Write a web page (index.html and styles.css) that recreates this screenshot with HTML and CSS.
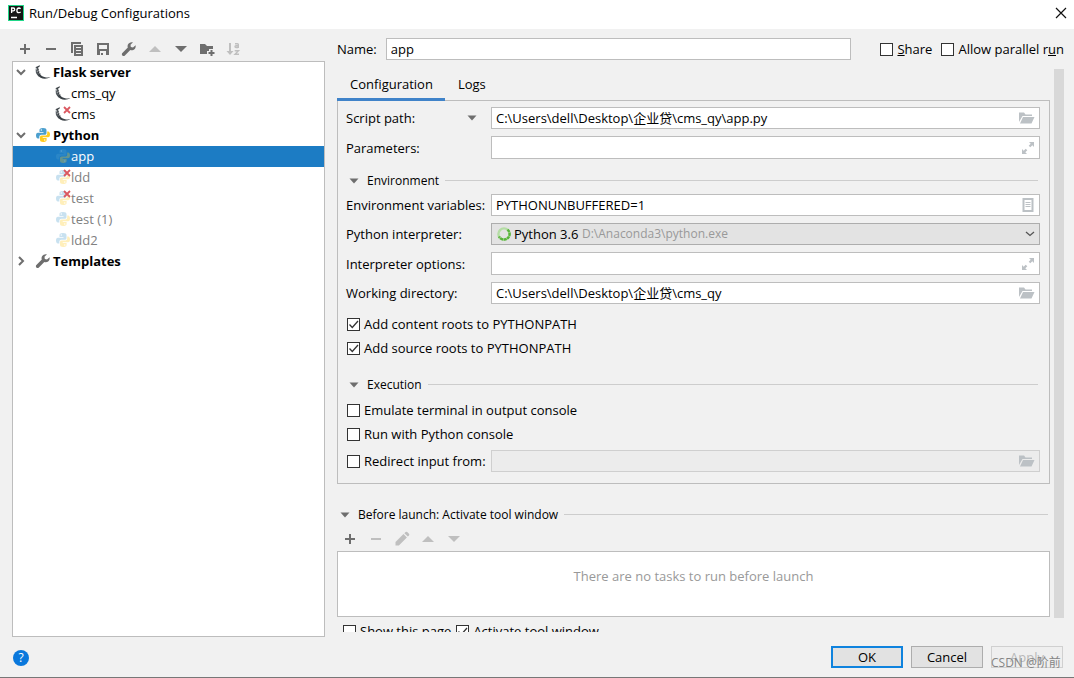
FILE: index.html
```html
<!DOCTYPE html>
<html lang="en">
<head>
<meta charset="utf-8">
<title>Run/Debug Configurations</title>
<link rel="stylesheet" href="styles.css">
</head>
<body>
<svg class="defs" aria-hidden="true">
  <symbol id="plus" viewBox="0 0 16 16"><path fill="currentColor" d="M7 3h2v4h4v2H9v4H7V9H3V7h4z"/></symbol>
  <symbol id="minus" viewBox="0 0 16 16"><path fill="currentColor" d="M3 7h10v2H3z"/></symbol>
  <symbol id="copy" viewBox="0 0 16 16"><path fill="currentColor" fill-rule="evenodd" d="M2 1h10v2H4v9H2zM5 4h9v11H5zM7 6v1h5V6zm0 3v1h5V9zm0 3v1h5v-1z"/></symbol>
  <symbol id="save" viewBox="0 0 16 16"><path fill="currentColor" fill-rule="evenodd" d="M2 2h12v12H2zM4 4v4h8V4zM5 10v4h1v-2h2v2h3v-4z"/></symbol>
  <symbol id="wrench" viewBox="0 0 16 16"><path fill="currentColor" d="M14.600 4.200 12 6.400 9.800 5.900 9.500 3.700 12 1.300C9.800.7 7.600 1.800 6.800 3.800c-.4 1-.3 1.900 0 2.800L1.400 12c-.7.7-.7 1.800 0 2.500s1.800.7 2.500 0l5.400-5.400c2.900 1 6-1.400 5.300-4.900z"/></symbol>
  <symbol id="up" viewBox="0 0 16 16"><path fill="currentColor" d="M8 5l6 6H2z"/></symbol>
  <symbol id="down" viewBox="0 0 16 16"><path fill="currentColor" d="M2 5h12l-6 6z"/></symbol>
  <symbol id="newfolder" viewBox="0 0 16 16"><path fill="currentColor" d="M1 3h5l2 2h6v3h-4v2H8v3H1z"/><path fill="currentColor" d="M11.500 9h2v2h2v2h-2v2h-2v-2h-2v-2h2z"/></symbol>
  <symbol id="sort" viewBox="0 0 16 16"><path fill="currentColor" d="M4 2h2v8h2.500L5 14 1.500 10H4z"/><path fill="none" stroke="currentColor" stroke-width="1.400" d="M10 2.700h2.500q.8 0 .8.800V7M13 4.700h-2q-1 0-1 .9t1 .9h2M9.700 9.700h3.800L10 13.300h4"/></symbol>
  <symbol id="pencil" viewBox="0 0 16 16"><path fill="currentColor" d="M1.500 14.500v-3.400l8-8 3.400 3.400-8 8zM10.400 2.200l1.200-1.200q.8-.7 1.600 0L15 2.800q.7.8 0 1.600l-1.200 1.200z"/></symbol>
  <symbol id="caret" viewBox="0 0 10 6"><path fill="currentColor" d="M.5.500h9L5 5.500z"/></symbol>
  <symbol id="chevron" viewBox="0 0 10 10"><path fill="none" stroke="currentColor" stroke-width="2" d="M1 3l4 4 4-4"/></symbol>
  <symbol id="folder" viewBox="0 0 16 12"><path fill="currentColor" d="M0 .5h5l1.500 2H13V4H3.500L0 10zM4 5h11.500L12.500 11.500H1z"/></symbol>
  <symbol id="expand" viewBox="0 0 14 14"><path fill="currentColor" d="M8 1h5v5l-1.700-1.700-2 2-1.600-1.600 2-2zM1 8l1.700 1.700 2-2 1.600 1.600-2 2L6 13H1z"/></symbol>
  <symbol id="doc" viewBox="0 0 12 14"><path fill="none" stroke="currentColor" stroke-width="2" d="M1.500 1h9v12h-9z"/><path stroke="currentColor" d="M3.500 4.500h5M3.500 6.500h5M3.500 8.500h5"/></symbol>
  <symbol id="flask" viewBox="0 0 16 16"><path fill="none" stroke="#9da2a6" stroke-width="1.600" d="M2.200 2.800C.8 6 1.400 9.800 4.300 12"/><path fill="#3a4045" d="M.3 4 1.200 3 4.600 1.200 5 2.200 3.300 3.300C3 6.500 4 9.600 6.500 11.700c2.200 1.700 5.400 2 9 1.600-3.200 1.600-6.900 1.900-9.900.4C2.500 12.200.8 9 .9 5.600c1 2.800 2 4.600 3.400 6-1.300-2-2.200-4.700-2.200-7.800z"/><path stroke="#3a4045" stroke-width=".7" d="M1.200 6.500 4 5.400M1.600 9l2.900-1.300M3.200 11.200l2.500-1.400"/></symbol>
  <symbol id="python" viewBox="0 0 16 16"><path fill="#4b9fce" d="M8 1c-3 0-3.500 1-3.500 2.200V5H8.500v.7H3C1.500 5.700 1 7 1 8.500s.6 3 2 3h1.300V9.700c0-1.200 1-2 2-2h3.500c1 0 1.700-.8 1.700-1.800V3.200C11.500 1.700 10.500 1 8 1z"/><path fill="#ffcb1f" d="M8.200 15c3 0 3.400-1 3.400-2.200V11H7.700v-.7H13c1.500 0 2-1.300 2-2.800s-.6-2.900-2-2.900h-.8v1.800c0 1.300-.9 2.200-2 2.200H6.700C5.600 8.600 5 9.400 5 10.300v2.500C5 14.300 6 15 8.200 15z"/><circle cx="6.300" cy="3" r=".7" fill="#fff"/><circle cx="9.800" cy="13" r=".7" fill="#fff"/></symbol>
  <symbol id="cross" viewBox="0 0 8 8"><path fill="none" stroke="#db5860" stroke-width="1.800" d="M1 1l6 6M7 1L1 7"/></symbol>
</svg>

<div class="dialog">
  <header class="titlebar">
    <svg class="app-icon" viewBox="0 0 16 16" aria-hidden="true"><rect width="16" height="16" fill="#21d789"/><rect x="1" y="1" width="14" height="14" fill="#161616"/><path fill="none" stroke="#fff" stroke-width="1.300" d="M3.600 8V3h1.700q1.400 0 1.400 1.400t-1.400 1.400H3.600M12.600 3.700Q11.900 3 10.900 3 8.900 3.200 8.900 5.400t2 2.200q1 0 1.700-.7M3 12.500h6"/></svg>
    <h1>Run/Debug Configurations</h1>
    <button class="close" aria-label="Close"><svg viewBox="0 0 12 12"><path stroke="#111" stroke-width="1.200" d="M1 1l10 10M11 1L1 11"/></svg></button>
  </header>

  <main class="content">
    <aside class="sidebar">
      <div class="toolbar">
        <button aria-label="Add"><svg><use href="#plus"/></svg></button>
        <button aria-label="Remove"><svg><use href="#minus"/></svg></button>
        <button aria-label="Copy"><svg><use href="#copy"/></svg></button>
        <button aria-label="Save"><svg><use href="#save"/></svg></button>
        <button aria-label="Edit templates"><svg><use href="#wrench"/></svg></button>
        <button aria-label="Move up" disabled><svg><use href="#up"/></svg></button>
        <button aria-label="Move down"><svg><use href="#down"/></svg></button>
        <button aria-label="New folder"><svg><use href="#newfolder"/></svg></button>
        <button aria-label="Sort" disabled><svg><use href="#sort"/></svg></button>
      </div>
      <ul class="tree">
        <li class="group"><svg class="arrow"><use href="#chevron"/></svg><svg class="icon"><use href="#flask"/></svg>Flask server</li>
        <li class="leaf"><svg class="icon"><use href="#flask"/></svg>cms_qy</li>
        <li class="leaf broken"><svg class="icon"><use href="#flask"/></svg><svg class="badge"><use href="#cross"/></svg>cms</li>
        <li class="group"><svg class="arrow"><use href="#chevron"/></svg><svg class="icon"><use href="#python"/></svg>Python</li>
        <li class="leaf faded selected"><svg class="icon"><use href="#python"/></svg>app</li>
        <li class="leaf faded broken"><svg class="icon"><use href="#python"/></svg><svg class="badge"><use href="#cross"/></svg>ldd</li>
        <li class="leaf faded broken"><svg class="icon"><use href="#python"/></svg><svg class="badge"><use href="#cross"/></svg>test</li>
        <li class="leaf faded"><svg class="icon"><use href="#python"/></svg>test (1)</li>
        <li class="leaf faded"><svg class="icon"><use href="#python"/></svg>ldd2</li>
        <li class="group"><svg class="arrow closed"><use href="#chevron"/></svg><svg class="icon tool"><use href="#wrench"/></svg>Templates</li>
      </ul>
    </aside>

    <section class="editor">
      <div class="name-row">
        <label for="name">Name:</label>
        <div class="field"><input id="name" type="text" value="app"></div>
        <label class="check"><input type="checkbox"><span><u>S</u>hare</span></label>
        <label class="check"><input type="checkbox"><span>Allow parallel r<u>u</u>n</span></label>
      </div>

      <div class="scroll">
        <div class="page">
          <nav class="tabs">
            <button class="tab active">Configuration</button>
            <button class="tab">Logs</button>
          </nav>
          <div class="panel">
            <div class="fields">
              <div class="row"><label for="script">Script path:</label><svg class="caret"><use href="#caret"/></svg>
                <div class="field"><input id="script" type="text" value="C:\Users\dell\Desktop\企业贷\cms_qy\app.py"><button aria-label="Browse"><svg class="i-folder"><use href="#folder"/></svg></button></div></div>
              <div class="row"><label for="params">Parameters:</label>
                <div class="field tall"><input id="params" type="text"><button aria-label="Expand"><svg class="i-expand"><use href="#expand"/></svg></button></div></div>
            </div>
            <h2 class="section"><svg class="caret"><use href="#caret"/></svg>Environment</h2>
            <div class="fields">
              <div class="row"><label for="env">Environment variables:</label>
                <div class="field"><input id="env" type="text" value="PYTHONUNBUFFERED=1"><button aria-label="Edit variables"><svg class="i-doc"><use href="#doc"/></svg></button></div></div>
              <div class="row"><label for="interp">Python interpreter:</label>
                <div class="field combo">
                  <svg class="ring" viewBox="0 0 14 14" aria-hidden="true"><circle cx="7" cy="7" r="5.600" fill="none" stroke="#b5dda5" stroke-width="2.400"/><path fill="none" stroke="#58b33c" stroke-width="2.400" stroke-dasharray="3 .6" d="M10.500 2.600A5.600 5.600 0 1 1 2 9.500"/></svg>
                  <select id="interp"><option>Python 3.6</option></select>
                  <span class="path">D:\Anaconda3\python.exe</span>
                  <svg class="drop" viewBox="0 0 10 6"><path fill="none" stroke="#555" stroke-width="1.300" d="M1 1l4 3.500L9 1"/></svg>
                </div></div>
              <div class="row"><label for="opts">Interpreter options:</label>
                <div class="field tall"><input id="opts" type="text"><button aria-label="Expand"><svg class="i-expand"><use href="#expand"/></svg></button></div></div>
              <div class="row"><label for="wd">Working directory:</label>
                <div class="field"><input id="wd" type="text" value="C:\Users\dell\Desktop\企业贷\cms_qy"><button aria-label="Browse"><svg class="i-folder"><use href="#folder"/></svg></button></div></div>
            </div>
            <div class="checks first">
              <label class="check"><input type="checkbox" checked><span>Add content roots to PYTHONPATH</span></label>
              <label class="check"><input type="checkbox" checked><span>Add source roots to PYTHONPATH</span></label>
            </div>
            <h2 class="section lower"><svg class="caret"><use href="#caret"/></svg>Execution</h2>
            <div class="checks">
              <label class="check"><input type="checkbox"><span>Emulate terminal in output console</span></label>
              <label class="check"><input type="checkbox"><span>Run with Python console</span></label>
            </div>
            <div class="row redirect">
              <label class="check"><input type="checkbox"><span>Redirect input from:</span></label>
              <div class="field disabled"><input type="text" aria-label="Input file" disabled><button aria-label="Browse" disabled><svg class="i-folder"><use href="#folder"/></svg></button></div>
            </div>
          </div>

          <h2 class="section before"><svg class="caret"><use href="#caret"/></svg>Before launch: Activate tool window</h2>
          <div class="toolbar tasks-bar">
            <button aria-label="Add task"><svg><use href="#plus"/></svg></button>
            <button aria-label="Remove task" disabled><svg><use href="#minus"/></svg></button>
            <button aria-label="Edit task" disabled><svg><use href="#pencil"/></svg></button>
            <button aria-label="Move task up" disabled><svg><use href="#up"/></svg></button>
            <button aria-label="Move task down" disabled><svg><use href="#down"/></svg></button>
          </div>
          <div class="tasks">There are no tasks to run before launch</div>
          <div class="options">
            <label class="check"><input type="checkbox"><span>Show this page</span></label>
            <label class="check"><input type="checkbox" checked><span>Activate tool window</span></label>
          </div>
        </div>
        <div class="scrollbar"></div>
      </div>
    </section>
  </main>

  <footer class="footer">
    <button class="help" aria-label="Help">?</button>
    <button class="btn primary">OK</button>
    <button class="btn">Cancel</button>
    <div class="apply"><button class="btn" disabled>Apply</button><span class="watermark">CSDN @阶前</span></div>
  </footer>
</div>
</body>
</html>
```
FILE: styles.css
```css
* { box-sizing: border-box; }
body {
  margin: 0;
  font: 13px/20px "Open Sans", "Noto Sans CJK SC", sans-serif;
  color: #000;
  background: #f1f1f1;
}
button, input, select { font: inherit; color: inherit; margin: 0; padding: 0; border: 0; background: none; }
svg { display: block; flex: none; }
.defs { display: none; }

.dialog { display: flex; flex-direction: column; height: 100vh; border-bottom: 1px solid #777; }

.titlebar { display: flex; align-items: center; gap: 5px; height: 29px; padding: 0 7px 3px 8px; background: #fff; }
.titlebar h1 { flex: 1; margin: 0; font-size: 13px; font-weight: 400; }
.app-icon { width: 16px; height: 16px; }
.close svg { width: 12px; height: 12px; }

.content { flex: 1; min-height: 0; display: grid; grid-template-columns: 313px 1fr; gap: 12px; padding: 0 10px 0 12px; }

.sidebar { display: flex; flex-direction: column; padding-top: 8px; min-height: 0; }
.toolbar { display: flex; align-items: center; gap: 10px; height: 24px; padding-left: 5px; color: #6e6e6e; }
.toolbar svg { width: 16px; height: 16px; }
.toolbar button:disabled { color: #bfbfbf; }

.tree { flex: 1; margin: 0; padding: 0; list-style: none; background: #fff; border: 1px solid #bdbdbd; }
.tree li { position: relative; display: flex; align-items: center; height: 21px; padding-bottom: 1px; }
.tree .group { padding-left: 3px; font-weight: 700; }
.tree .leaf { padding-left: 42px; }
.arrow { width: 10px; height: 10px; margin-right: 9px; color: #6e6e6e; }
.arrow.closed { transform: rotate(-90deg); }
.icon { width: 16px; height: 16px; }
.group .icon { margin-right: 2px; }
.icon.tool { color: #6e6e6e; }
.badge { position: absolute; left: 50px; top: 2px; width: 8px; height: 8px; }
.faded { color: #808080; }
.faded .icon { opacity: .3; }
.tree .selected { color: #fff; background: #1c7cc4; }

.editor { display: flex; flex-direction: column; min-width: 0; min-height: 0; padding: 9px 0 5px; }
.name-row { display: flex; align-items: center; gap: 9px; }
.name-row .field { margin-right: 20px; }

.field { flex: 1; min-width: 0; display: flex; align-items: center; height: 22px; padding: 0 4px; background: #fff; border: 1px solid #bdbdbd; }
.field.tall { height: 23px; }
.field input { flex: 1; min-width: 0; width: 0; outline: none; }
.field button { color: #bcc1c5; }
.field.disabled { background: #ececec; border-color: #cfcfcf; }
.i-folder { width: 16px; height: 12px; }
.i-expand { width: 14px; height: 14px; }
.i-doc { width: 12px; height: 14px; margin-right: 1px; }
.combo { background: #e3e3e3; border-color: #adadad; padding-left: 5px; gap: 3px; }
.combo select { appearance: none; outline: none; }
.combo .path { flex: 1; font-size: 12px; color: #999; }
.ring { width: 14px; height: 14px; }
.drop { width: 10px; height: 6px; }

.check { display: flex; align-items: center; gap: 4px; white-space: nowrap; }
.check input { appearance: none; flex: none; width: 13px; height: 13px; border: 1px solid #333; background: #fff; }
.check input:checked { background: #fff url("data:image/svg+xml,%3Csvg xmlns='http://www.w3.org/2000/svg' viewBox='0 0 11 11'%3E%3Cpath fill='none' stroke='%23333' stroke-width='1.300' d='M1.500 5.500l2.800 3L10 2'/%3E%3C/svg%3E") center / 11px 11px no-repeat; }

.scroll { flex: 1; min-height: 0; display: flex; gap: 4px; margin-top: 9px; overflow: hidden; }
.page { flex: 1; min-width: 0; }
.scrollbar { width: 10px; margin-bottom: 14px; background: #d8d8d8; }

.tabs { position: relative; z-index: 1; display: flex; height: 32px; }
.tab { padding: 0 12px 0 13px; border-bottom: 3px solid transparent; }
.tab.active { border-color: #4083c9; }
.panel { margin-top: -1px; padding: 6px 9px 11px 8px; border: 1px solid #bdbdbd; }
.fields { display: flex; flex-direction: column; gap: 7px; }
.row { display: flex; align-items: center; }
.row > label { width: 145px; }
.row > .caret { margin: 0 14px 0 -24px; }
.caret { width: 10px; height: 6px; color: #6e6e6e; }

.section { display: flex; align-items: center; height: 35px; margin: 0; padding: 8px 2px 0 3px; font-size: 12px; font-weight: 400; }
.section .caret { margin-right: 8px; }
.section::after { content: ""; flex: 1; height: 1px; margin-left: 6px; background: #cdcdcd; }
.section.lower { margin-top: 3px; }
.panel .check { padding-left: 1px; }
.checks .check { height: 24px; }
.checks.first { margin-top: 8px; }
.redirect { margin-top: 4px; }

.section.before { height: 43px; padding-top: 18px; }
.tasks-bar { padding-left: 5px; }
.tasks { height: 66px; padding-top: 14px; text-align: center; color: #999; background: #fff; border: 1px solid #bdbdbd; }
.options { display: flex; gap: 5px; padding: 4px 6px; }

.footer { display: flex; align-items: center; gap: 8px; height: 40px; padding: 0 11px 0 13px; }
.help { width: 16px; height: 16px; margin: 2px auto 0 0; border-radius: 50%; font-size: 12px; line-height: 16px; color: #fff; background: #0a78dc; }
.btn { width: 72px; height: 22px; line-height: 18px; background: #e2e2e2; border: 1px solid #adadad; }
.btn.primary { border: 2px solid #0f83de; }
.btn:disabled { color: #b9b9b9; background: #efefef; border-color: #d0d0d0; }
.apply { position: relative; }
.watermark { position: absolute; left: 0; top: 8px; font-size: 12px; line-height: 18px; white-space: nowrap; color: #858585; pointer-events: none; }
```
